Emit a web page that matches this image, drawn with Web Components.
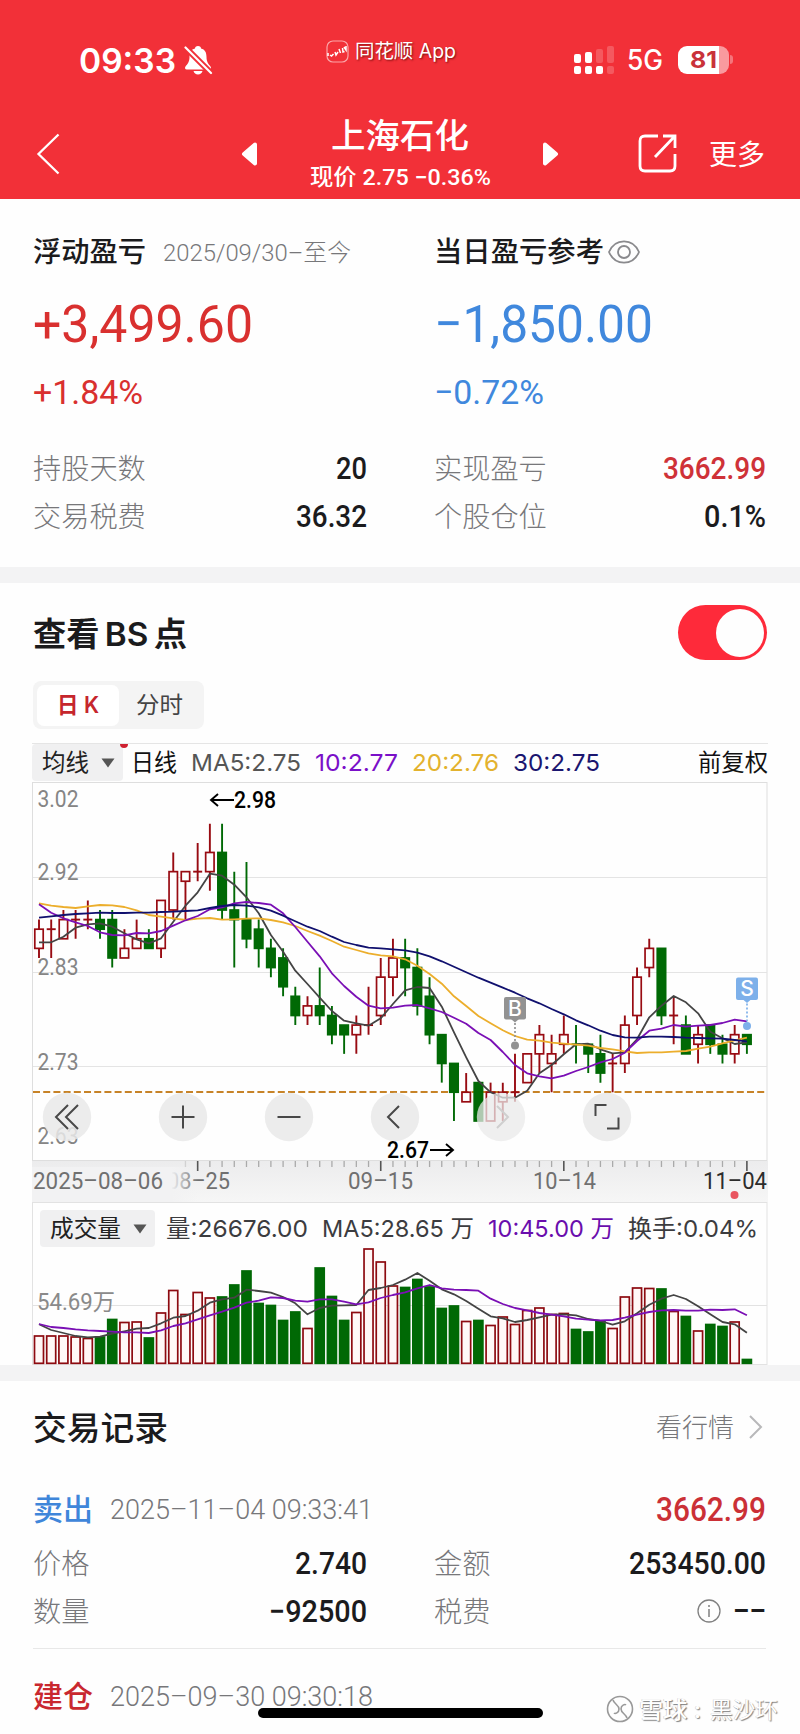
<!DOCTYPE html>
<html lang="zh-CN">
<head>
<meta charset="UTF-8">
<title>上海石化</title>
<style>
    body {
        margin: 0;
        width: 800px;
        height: 1734px;
        overflow: hidden;
        background: #fefefe;
        color: #1b1b1d;
        font-family: Inter, "Noto Sans CJK SC", sans-serif;
    }
</style>
</head>
<body>
<stock-page></stock-page>

<script>
/**
 * Single line of text squeezed or stretched to a given width.
 * Usage: <fit-text w="120">text</fit-text>
 */
class FitText extends HTMLElement {
    constructor() {
        super();
        this.attachShadow({ mode: 'open' });
        this.shadowRoot.innerHTML = `
            <style>
                :host { display: block; flex: none; white-space: nowrap; line-height: 1.2; }
                :host([din]) { font-family: Roboto, "Noto Sans CJK SC", sans-serif; }
                span { display: inline-block; padding-top: 2px; transform-origin: 0 50%; }
            </style>
            <span><slot></slot></span>
        `;
    }

    connectedCallback() {
        const w = Number(this.getAttribute('w'));
        const span = this.shadowRoot.querySelector('span');
        this.style.width = w + 'px';
        span.style.transform = `scaleX(${w / span.getBoundingClientRect().width})`;
    }
}

class StatusBar extends HTMLElement {
    constructor() {
        super();
        this.attachShadow({ mode: 'open' });
        this.shadowRoot.innerHTML = `
            <style>
                :host { display: grid; grid-template-columns: 326px 1fr auto; height: 108px; color: #fff; }
                .left, .right { display: flex; align-items: center; height: 119px; }
                .left { padding-left: 79px; gap: 8px; }
                .time { font-size: 34.5px; font-weight: 600; }
                .app { display: flex; align-items: center; gap: 6px; height: 102px; font-size: 19.5px; text-shadow: 1px 1px 2px #7a1010; }
                .right { padding-right: 67px; }
                .net { font-size: 28px; font-weight: 500; margin: 1px 15px 0 13px; }
                .battery {
                    display: flex; align-items: center; justify-content: center;
                    width: 51px; height: 28px; border-radius: 9px;
                    background: linear-gradient(90deg, #fff 81%, #f99a9e 81%);
                    color: #c9323a; font-size: 23px; font-weight: 700;
                }
                .cap { width: 3px; height: 9px; margin-left: 1px; border-radius: 0 4px 4px 0; background: #f5757b; }
            </style>
            <div class="left">
                <fit-text class="time" w="97">09:33</fit-text>
                <svg width="29" height="30" viewBox="0 0 29 30">
                    <path d="M14 1c-2 0-3 1-3 2.500c-4 1-5.500 4-5.500 8.500c0 5-2 7-4 9.500c-1 1.500-.4 3 1.200 3h22.600c1.600 0 2.200-1.500 1.200-3c-2-2.500-4-4.500-4-9.500c0-4.500-1.500-7.500-5.500-8.500C17 2 16 1 14 1z" fill="#fff"/>
                    <path d="M9.500 26h9c-.6 2.200-2.200 3.500-4.500 3.500S10.100 28.200 9.500 26z" fill="#fff"/>
                    <path d="M1 2L27 28" stroke="#f23038" stroke-width="6"/>
                    <path d="M1.500 2.500L27 28" stroke="#fff" stroke-width="2.200" stroke-linecap="round"/>
                </svg>
            </div>
            <div class="app">
                <svg width="23" height="23" viewBox="0 0 23 23" fill="none">
                    <rect x="1" y="1" width="21" height="21" rx="6" stroke="#fba5a8" stroke-width="1.200"/>
                    <path d="M2 13v3M4 15l1.500 1 2-2M9 12l1 3 2-3M13 9l1.500 4M16.500 8l.5 4 1.500-.5M20 6v4l-2-3" stroke="#fff" stroke-width="1.500"/>
                </svg>
                <fit-text w="101">同花顺 App</fit-text>
            </div>
            <div class="right">
                <svg width="41" height="30" viewBox="0 0 41 30" fill="#fff">
                    <rect x="1" y="9" width="7" height="9" rx="2"/>
                    <rect x="12" y="7" width="7" height="11" rx="2"/>
                    <rect x="23" y="4" width="7" height="14" rx="2" opacity=".2"/>
                    <rect x="34" y="1" width="7" height="17" rx="2" opacity=".2"/>
                    <rect x="1" y="21" width="7" height="8" rx="2"/>
                    <rect x="12" y="21" width="7" height="8" rx="2"/>
                    <rect x="23" y="21" width="7" height="8" rx="2"/>
                    <rect x="34" y="21" width="7" height="8" rx="2" opacity=".2"/>
                </svg>
                <fit-text class="net" w="36">5G</fit-text>
                <div class="battery"><fit-text w="27">81</fit-text></div>
                <div class="cap"></div>
            </div>
        `;
    }
}

class NavBar extends HTMLElement {
    constructor() {
        super();
        this.attachShadow({ mode: 'open' });
        this.shadowRoot.innerHTML = `
            <style>
                :host { display: flex; align-items: center; height: 91px; padding: 0 34px 0 36px; color: #fff; }
                .prev { margin-left: 181px; }
                .title { width: 182px; margin: 0 50px; padding-bottom: 8px; display: flex; flex-direction: column; align-items: center; }
                .name { font-size: 34.5px; font-weight: 500; line-height: 50px; height: 51px; }
                .price { font-size: 22.5px; font-weight: 500; line-height: 30px; height: 30px; }
                .share { margin-left: 79px; }
                .more { margin-left: 32px; padding-top: 2px; font-size: 28px; }
            </style>
            <svg width="24" height="42" viewBox="0 0 24 42" fill="none" stroke="#fff" stroke-width="2.300"><path d="M22.500 1.500L2.500 21l20 19.500"/></svg>
            <svg class="prev" width="18" height="24" viewBox="0 0 18 24"><path d="M14 2.500L3 12l11 9.500z" fill="#fff" stroke="#fff" stroke-width="4" stroke-linejoin="round"/></svg>
            <div class="title">
                <fit-text class="name" w="138">上海石化</fit-text>
                <fit-text class="price" din w="181">现价 2.75 −0.36%</fit-text>
            </div>
            <svg width="18" height="24" viewBox="0 0 18 24"><path d="M4 2.500L15 12 4 21.500z" fill="#fff" stroke="#fff" stroke-width="4" stroke-linejoin="round"/></svg>
            <svg class="share" width="39" height="39" viewBox="0 0 39 39" fill="none" stroke="#fff" stroke-width="2.800">
                <path d="M20 2H7Q2 2 2 7v25q0 5 5 5h25q5 0 5-5V20M25 2h12v12M36 3L17 23"/>
            </svg>
            <fit-text class="more" w="56">更多</fit-text>
        `;
    }
}

class PnlColumn extends HTMLElement {
    constructor() {
        super();
        this.attachShadow({ mode: 'open' });
        this.shadowRoot.innerHTML = `
            <style>
                :host { display: block; --tone: #d9302f; }
                :host([down]) { --tone: #4088dd; }
                .head { display: flex; align-items: center; height: 38px; font-size: 28px; font-weight: 500; }
                .amount, .percent { display: flex; align-items: center; color: var(--tone); }
                .amount { height: 60px; margin-top: 22px; font-size: 52.500px; font-weight: 450; }
                .percent { height: 40px; margin: 18px 0 33px; font-size: 34px; font-weight: 450; }
            </style>
            <div class="head"><slot name="head"></slot></div>
            <div class="amount"><slot name="amount"></slot></div>
            <div class="percent"><slot name="percent"></slot></div>
            <slot></slot>
        `;
    }
}

class DataRow extends HTMLElement {
    constructor() {
        super();
        this.attachShadow({ mode: 'open' });
        this.shadowRoot.innerHTML = `
            <style>
                :host { display: flex; align-items: center; justify-content: space-between; height: 48px; }
                .label { padding-top: 3px; font-size: 28.200px; font-weight: 300; color: #77777a; line-height: 1.2; }
                .value { display: flex; align-items: center; gap: 12px; font-size: 31px; font-weight: 500; }
                :host([red]) .value { color: #cf3238; }
            </style>
            <div class="label">${this.getAttribute('label')}</div>
            <div class="value"><slot></slot></div>
        `;
    }
}

class ToggleSwitch extends HTMLElement {
    constructor() {
        super();
        this.attachShadow({ mode: 'open' });
        this.shadowRoot.innerHTML = `
            <style>
                :host { display: flex; align-items: center; justify-content: flex-end; box-sizing: border-box; width: 89px; height: 55px; padding: 3px; border-radius: 28px; background: #fe2a3a; }
                i { width: 48px; height: 48px; border-radius: 50%; background: #fefefe; }
            </style>
            <i></i>
        `;
    }
}

class SelectChip extends HTMLElement {
    constructor() {
        super();
        this.attachShadow({ mode: 'open' });
        this.shadowRoot.innerHTML = `
            <style>
                :host { display: flex; flex: none; align-items: center; gap: 12px; box-sizing: border-box; height: 37px; padding-left: 10px; border-radius: 4px; background: #f0f0f1; color: #222; }
            </style>
            <slot></slot>
            <svg width="14" height="10" viewBox="0 0 14 10"><path d="M.5 .5h13L7 9.500z" fill="#555"/></svg>
        `;
    }
}

// [up, high, body top, body bottom, low] in cents below 2.98, then volume bar height
const CANDLES = [
    [1, 10, 11, 13, 14, 28], [1, 10, 11, 11, 14, 28], [1, 9, 10, 12, 12, 28], [1, 9, 10, 10, 12, 27],
    [1, 8, 10, 10, 11, 25.5], [0, 9, 10, 11, 12, 27], [0, 9, 10, 14, 15, 44.5], [1, 11, 13, 14, 14, 41.5],
    [1, 10, 12, 13, 13, 42], [0, 11, 12, 13, 13, 26], [1, 8, 8, 13, 14, 51], [1, 3, 5, 9, 10, 73.5],
    [1, 5, 5, 6, 10, 49.5], [1, 2, 5, 5, 6, 71.5], [1, 0, 3, 5, 7, 66], [0, 0, 3, 9, 10, 67],
    [0, 5, 9, 10, 15, 79], [0, 4, 10, 12, 13, 93], [0, 10, 11, 13, 15, 60.5], [0, 12, 13, 15, 16, 58.5],
    [0, 13, 14, 17, 18, 43.5], [0, 17, 18, 20, 21, 52], [1, 18, 19, 20, 21, 35.5], [0, 15, 19, 20, 21, 96],
    [0, 19, 20, 22, 23, 67.5], [0, 21, 21, 22, 24, 43.5], [1, 20, 21, 22, 24, 51.5], [1, 17, 21, 21, 22, 115],
    [1, 14, 16, 20, 21, 102], [1, 12, 14, 16, 18, 78], [0, 12, 14, 15, 18, 76.5], [0, 13, 15, 19, 20, 84.5],
    [0, 16, 18, 22, 23, 77], [0, 22, 22, 25, 27, 55.5], [0, 25, 25, 28, 31, 58], [1, 26, 28, 29, 29, 42.5],
    [0, 27, 27, 31, 31, 43.5], [1, 27, 28, 31, 31, 38.5], [1, 27, 28, 29, 31, 47], [1, 24, 28, 28, 29, 39.5],
    [1, 24, 24, 27, 27, 53.5], [1, 21, 22, 24, 26, 56], [1, 22, 24, 25, 28, 49.5], [1, 20, 22, 23, 24, 50.5],
    [0, 21, 23, 23, 25, 34.5], [0, 23, 23, 24, 26, 32], [0, 22, 24, 26, 27, 43], [1, 24, 25, 25, 28, 35.5],
    [1, 20, 21, 25, 26, 67], [1, 15, 16, 20, 21, 76], [1, 12, 13, 15, 16, 75.5], [0, 13, 13, 20, 21, 75],
    [1, 18, 20, 20, 23, 52.5], [0, 20, 21, 24, 24, 47.5], [1, 21, 22, 23, 25, 33], [0, 21, 21, 23, 24, 39.5],
    [0, 22, 23, 24, 25, 37.5], [1, 21, 22, 24, 25, 42], [0, 22, 22, 23, 24, 4.5]
];

// average lines, in thirds of a pixel from the top of each panel
const MA = {
    5: [487, 487, 470, 443, 433, 430, 440, 460, 478, 490, 475, 425, 377, 337, 281, 287, 314, 352, 400, 465, 515, 572, 612, 653, 693, 722, 730, 737, 715, 672, 631, 621, 624, 680, 757, 832, 903, 937, 953, 953, 932, 880, 855, 823, 793, 791, 808, 820, 817, 778, 712, 677, 648, 667, 700, 755, 775, 792, 787],
    10: [373, 398, 415, 427, 438, 457, 465, 466, 459, 460, 453, 437, 421, 408, 388, 382, 370, 366, 369, 374, 400, 441, 485, 529, 580, 618, 650, 677, 685, 683, 677, 675, 685, 696, 713, 731, 759, 780, 816, 855, 880, 889, 895, 887, 873, 861, 847, 837, 818, 783, 752, 746, 735, 740, 737, 735, 729, 719, 724],
    20: [370, 377, 381, 384, 379, 375, 376, 381, 391, 405, 410, 415, 420, 416, 414, 419, 418, 416, 415, 420, 427, 438, 453, 467, 483, 500, 510, 520, 526, 529, 538, 557, 582, 611, 649, 678, 708, 730, 751, 768, 779, 782, 788, 791, 794, 797, 804, 808, 814, 819, 817, 817, 815, 813, 806, 800, 790, 781, 773],
    30: [413, 409, 405, 402, 400, 398, 399, 399, 398, 398, 396, 395, 393, 391, 384, 378, 375, 377, 382, 392, 407, 424, 440, 453, 470, 486, 495, 503, 505, 508, 511, 518, 529, 544, 560, 577, 593, 608, 623, 638, 655, 670, 687, 703, 721, 736, 752, 765, 772, 773, 770, 770, 771, 773, 774, 775, 776, 780, 784]
};
const VOL_MA = {
    5: [523, 540, 549, 558, 562, 560, 551, 544, 536, 534, 520, 503, 498, 482, 458, 448, 443, 419, 423, 428, 441, 460, 493, 474, 467, 466, 465, 420, 414, 405, 389, 369, 392, 418, 433, 453, 476, 499, 505, 516, 510, 502, 494, 493, 496, 507, 513, 524, 514, 490, 464, 446, 435, 447, 469, 493, 516, 523, 548],
    10: [522, 531, 534, 538, 541, 543, 545, 547, 547, 549, 541, 528, 520, 508, 496, 485, 473, 458, 452, 442, 444, 452, 455, 448, 448, 455, 463, 457, 444, 435, 427, 415, 405, 415, 419, 420, 422, 446, 462, 474, 481, 489, 494, 499, 506, 509, 511, 510, 503, 494, 486, 481, 480, 482, 482, 479, 480, 478, 496]
};
const RED = '#980b12';
const GREEN = '#006905';
const LINE_COLORS = { 5: '#444', 10: '#7a0fb5', 20: '#ecae2c', 30: '#10106e' };

const xAt = i => 7 + i * 12.205;

function maLine(points, color, top) {
    const d = points.map((y, i) => `${xAt(i).toFixed(1)},${(y / 3 + top).toFixed(1)}`).join(' ');
    return `<polyline points="${d}" fill="none" stroke="${color}" stroke-width="1.8" stroke-linejoin="round"/>`;
}

class PriceChart extends HTMLElement {
    constructor() {
        super();
        this.attachShadow({ mode: 'open' });
        this.shadowRoot.innerHTML = `
            <style>
                :host { display: block; height: 379px; }
                svg { display: block; overflow: visible; }
                text { font: 24px Roboto, sans-serif; fill: #858585; }
                .peak { font-weight: 500; fill: #000; }
                .tag { font: 500 21px Inter, sans-serif; fill: #fff; text-anchor: middle; }
            </style>
            <svg width="736" height="379" viewBox="0 0 736 379">
                <rect x=".5" y=".5" width="734.500" height="378" fill="none" stroke="#dedede"/>
                <path d="M1 95.500h734M1 190.500h734M1 284.500h734" stroke="#e4e4e4"/>
                ${this.labels()}
                <path d="M1 310h734" stroke="#c78327" stroke-width="2" stroke-dasharray="7 3.200"/>
                ${CANDLES.map((c, i) => this.candle(c, i)).join('')}
                ${[5, 20, 10, 30].map(n => maLine(MA[n], LINE_COLORS[n], -2)).join('')}
                <g stroke="#000" stroke-width="1.900" fill="none">
                    <path d="M202 18h-22M186 12l-7 6 7 6M398 368h22M414 362l7 6-7 6"/>
                </g>
                <text class="peak" x="202" y="26" textLength="42" lengthAdjust="spacingAndGlyphs">2.98</text>
                <text class="peak" x="355" y="376" textLength="42" lengthAdjust="spacingAndGlyphs">2.67</text>
                ${this.marker('B', 483, 215, 263.500, '#929292')}
                ${this.marker('S', 715, 195.500, 244, '#7db0ea')}
                ${this.controls()}
            </svg>
        `;
    }

    labels() {
        const rows = [['3.02', 24.5], ['2.92', 98], ['2.83', 193], ['2.73', 287.500], ['2.63', 362]];
        return rows.map(([t, y]) => `<text x="5.500" y="${y}" textLength="41" lengthAdjust="spacingAndGlyphs">${t}</text>`).join('');
    }

    candle([up, hi, top, bottom, lo], i) {
        const y = n => 41.700 + n * 9.590;
        const x = xAt(i);
        const color = up ? RED : GREEN;
        const wicks = `<path d="M${x} ${y(hi)}V${y(top)}M${x} ${y(bottom)}V${y(lo)}" stroke="${color}" stroke-width="1.9"/>`;
        if (top === bottom) {
            return wicks + `<path d="M${x - 4.500} ${y(top)}h9" stroke="${color}" stroke-width="1.9"/>`;
        }
        return wicks + `<rect x="${x - 4.200}" y="${y(top)}" width="8.400" height="${y(bottom) - y(top)}" fill="${up ? '#fefefe' : GREEN}" stroke="${color}" stroke-width="1.700"/>`;
    }

    marker(letter, x, top, dot, color) {
        return `
            <rect x="${x - 11}" y="${top}" width="22" height="22.500" rx="2" fill="${color}"/>
            <path d="M${x - 4} ${top + 22}h8l-4 3.500z" fill="${color}"/>
            <path d="M${x} ${top + 26}V${dot}" stroke="${color}" stroke-width="1.700" stroke-dasharray="2 2"/>
            <circle cx="${x}" cy="${dot}" r="4" fill="${color}"/>
            <text class="tag" x="${x}" y="${top + 18.500}">${letter}</text>
        `;
    }

    controls() {
        const icons = [
            [35, 'M1 -12L-11 0 1 12M11 -12L-1 0 11 12'],
            [151, 'M-11.500 0h23M0 -11.500v23'],
            [257, 'M-11.500 0h23'],
            [363, 'M4 -11L-7 0 4 11'],
            [469, 'M-4 -11L7 0-4 11'],
            [575, 'M-11.500 -1v-11h11M0 11.500h11.500v-11']
        ];
        return icons.map(([x, d], i) => `
            <g transform="translate(${x} 335)">
                <circle r="24.200" fill="#e9e9e9" fill-opacity="${i === 4 ? .75 : .85}"/>
                <path d="${d}" fill="none" stroke="${i === 4 ? '#cfcfcf' : '#484848'}" stroke-width="2"/>
            </g>
        `).join('');
    }
}

class DateAxis extends HTMLElement {
    constructor() {
        super();
        this.attachShadow({ mode: 'open' });
        let ticks = '';
        for (let i = 12; i < 59; i++) {
            const major = (i - 13) % 15 === 0;
            ticks += `<path d="M${xAt(i)} 0v${major ? 10 : 6}" stroke="${major ? '#555' : '#aaa'}" stroke-width="${major ? 1.6 : 1.3}" ${i === 12 ? 'opacity=".4"' : ''}/>`;
        }
        this.shadowRoot.innerHTML = `
            <style>
                :host { display: block; height: 41px; background: linear-gradient(#ececed, #f6f6f6); }
                svg { display: block; overflow: visible; }
                text { font: 23px Roboto, sans-serif; fill: #707070; }
                .last { fill: #2c2c2c; }
            </style>
            <svg width="736" height="41" viewBox="0 0 736 41">
                <defs>
                    <linearGradient id="fade"><stop offset=".84" stop-color="#f2f2f3"/><stop offset="1" stop-color="#f2f2f3" stop-opacity="0"/></linearGradient>
                </defs>
                ${ticks}
                <text x="135" y="27.500" textLength="63" lengthAdjust="spacingAndGlyphs">08–25</text>
                <rect x="0" y="6" width="166" height="35" fill="url(#fade)"/>
                <text x="1" y="27.500" textLength="130" lengthAdjust="spacingAndGlyphs">2025–08–06</text>
                <text x="316" y="27.500" textLength="65" lengthAdjust="spacingAndGlyphs">09–15</text>
                <text x="501" y="27.500" textLength="63" lengthAdjust="spacingAndGlyphs">10–14</text>
                <text class="last" x="671" y="27.500" textLength="64" lengthAdjust="spacingAndGlyphs">11–04</text>
                <circle cx="702.500" cy="34" r="4" fill="#e95560"/>
            </svg>
        `;
    }
}

class VolumeChart extends HTMLElement {
    constructor() {
        super();
        this.attachShadow({ mode: 'open' });
        this.shadowRoot.innerHTML = `
            <style>
                :host { display: grid; height: 163px; }
                header, svg { grid-area: 1 / 1; }
                header { display: flex; align-items: center; height: 37px; margin: 8px 0 0 8px; font-size: 23.500px; color: #3c3c3f; }
                select-chip { width: 115px; margin-right: 11px; }
                .next { margin-left: 14px; }
                .ma10 { color: #6a0dad; }
                text { font: 23px Roboto, "Noto Sans CJK SC", sans-serif; fill: #8a8a8a; }
            </style>
            <svg width="736" height="163" viewBox="0 0 736 163">
                <rect x=".5" y=".5" width="734.500" height="162" fill="#fefefe" stroke="#e2e2e2"/>
                <path d="M1 103.500h734" stroke="#e2e2e2"/>
                <text x="5" y="107.500" textLength="78" lengthAdjust="spacingAndGlyphs">54.69万</text>
                ${CANDLES.map((c, i) => this.bar(c[0], c[5], i)).join('')}
                ${[5, 10].map(n => maLine(VOL_MA[n], LINE_COLORS[n], -52)).join('')}
            </svg>
            <header>
                <select-chip><fit-text w="71">成交量</fit-text></select-chip>
                <fit-text w="142">量:26676.00</fit-text>
                <fit-text class="next" w="152">MA5:28.65 万</fit-text>
                <fit-text class="next ma10" w="126">10:45.00 万</fit-text>
                <fit-text class="next" w="130">换手:0.04%</fit-text>
            </header>
        `;
    }

    bar(up, h, i) {
        const x = xAt(i) - 4.500;
        return `<rect x="${x}" y="${161.300 - h + .7}" width="9" height="${h - .7}" fill="${up ? '#fff8f7' : GREEN}" stroke="${up ? '#8d0a10' : GREEN}" stroke-width="1.700"/>`;
    }
}

class ChartSection extends HTMLElement {
    constructor() {
        super();
        this.attachShadow({ mode: 'open' });
        this.shadowRoot.innerHTML = `
            <style>
                :host { display: block; height: 760px; padding: 22px 32px 0; }
                .title { display: flex; align-items: center; justify-content: space-between; height: 55px; padding: 0 1px; font-size: 32.500px; font-weight: 600; word-spacing: -3px; }
                .title fit-text { padding-top: 2px; }
                .tabs { display: flex; align-items: center; box-sizing: border-box; width: 171px; height: 48px; margin: 21px 0 14px 1px; padding: 4px; border-radius: 8px; background: #f4f4f4; font-size: 23px; }
                .tabs div { display: flex; align-items: center; justify-content: center; flex: 1; height: 41px; border-radius: 7px; color: #444; }
                .tabs .on { background: #fff; color: #c6262d; font-weight: 600; }
                .bar { display: flex; align-items: center; position: relative; box-sizing: border-box; height: 39px; border-top: 1px solid #e5e5e5; padding-bottom: 1px; font-size: 23.500px; color: #111; }
                .bar select-chip { width: 91px; margin-right: 8px; }
                .ma { margin-left: 14px; }
                .ma5 { color: #555; }
                .ma10 { color: #7a10c8; }
                .ma20 { color: #e3b22e; }
                .ma30 { color: #1b1670; }
                .adjust { margin-left: auto; }
                .dot { position: absolute; left: 88px; top: 0; width: 8px; height: 4px; border-radius: 0 0 4px 4px; background: #cf2030; }
            </style>
            <div class="title"><fit-text w="154">查看 BS 点</fit-text><toggle-switch></toggle-switch></div>
            <div class="tabs">
                <div class="on"><fit-text w="42">日 K</fit-text></div>
                <div><fit-text w="47">分时</fit-text></div>
            </div>
            <div class="bar">
                <select-chip><fit-text w="47">均线</fit-text></select-chip>
                <fit-text w="46">日线</fit-text>
                <fit-text class="ma ma5" w="110">MA5:2.75</fit-text>
                <fit-text class="ma ma10" w="83">10:2.77</fit-text>
                <fit-text class="ma ma20" w="87">20:2.76</fit-text>
                <fit-text class="ma ma30" w="87">30:2.75</fit-text>
                <fit-text class="adjust" w="70">前复权</fit-text>
                <i class="dot"></i>
            </div>
            <price-chart></price-chart>
            <date-axis></date-axis>
            <volume-chart></volume-chart>
        `;
    }
}

class TradeHead extends HTMLElement {
    constructor() {
        super();
        this.attachShadow({ mode: 'open' });
        this.shadowRoot.innerHTML = `
            <style>
                :host { display: flex; align-items: center; height: 60px; }
                .kind { font-size: 29.500px; font-weight: 500; color: #3f86da; }
                :host([buy]) .kind { color: #c9282f; }
                .date { margin-left: 17px; font-size: 28.500px; font-weight: 300; color: #77777a; }
                .sum { margin-left: auto; font-size: 33px; font-weight: 500; color: #cb3036; }
            </style>
            <fit-text class="kind" w="60">${this.getAttribute('kind')}</fit-text>
            <fit-text class="date" din w="263">${this.getAttribute('date')}</fit-text>
            <div class="sum"><slot></slot></div>
        `;
    }
}

class TradeRecords extends HTMLElement {
    constructor() {
        super();
        this.attachShadow({ mode: 'open' });
        this.shadowRoot.innerHTML = `
            <style>
                :host { display: block; padding: 16px 34px 0 33px; }
                .title { display: flex; align-items: center; height: 60px; font-size: 33.500px; font-weight: 500; }
                .link { margin: 0 14px 0 auto; font-size: 26px; font-weight: 300; color: #77777a; }
                .title svg { margin-right: 3px; }
                .first { margin-top: 22px; }
                .grid { display: grid; grid-template-columns: 334px 332px; column-gap: 67px; padding-bottom: 13px; border-bottom: 1px solid #e8e8e8; }
                .second { margin-top: 17px; }
            </style>
            <div class="title">
                <fit-text w="135">交易记录</fit-text>
                <fit-text class="link" w="78">看行情</fit-text>
                <svg width="15" height="26" viewBox="0 0 15 26" fill="none" stroke="#b8b8ba" stroke-width="2"><path d="M2 2l11 11L2 24"/></svg>
            </div>
            <trade-head class="first" kind="卖出" date="2025–11–04 09:33:41"><fit-text din w="110">3662.99</fit-text></trade-head>
            <div class="grid">
                <data-row label="价格"><fit-text din w="72">2.740</fit-text></data-row>
                <data-row label="金额"><fit-text din w="137">253450.00</fit-text></data-row>
                <data-row label="数量"><fit-text din w="98">−92500</fit-text></data-row>
                <data-row label="税费">
                    <svg width="24" height="24" viewBox="0 0 24 24" fill="none" stroke="#808080" stroke-width="1.300"><circle cx="12" cy="12" r="11"/><path d="M12 10v8M12 6v2" stroke-width="1.500"/></svg>
                    <fit-text din w="33">––</fit-text>
                </data-row>
            </div>
            <trade-head class="second" buy kind="建仓" date="2025–09–30 09:30:18"></trade-head>
        `;
    }
}

class PageWatermark extends HTMLElement {
    constructor() {
        super();
        this.attachShadow({ mode: 'open' });
        this.shadowRoot.innerHTML = `
            <style>
                :host { display: flex; align-items: center; color: #fff; font-size: 22.500px; font-weight: 500; text-shadow: 1px 1px 1px #808080, -.5px -.5px 0 #ccc; }
                svg { margin-right: 5px; }
                .author { margin-left: 9px; font-weight: 400; }
            </style>
            <svg width="28" height="28" viewBox="0 0 28 28" fill="none">
                <g stroke="#999" stroke-width="1.600">
                    <circle cx="14" cy="14" r="12.500"/>
                    <path d="M7 5c1 4 6 5 6 9s-4 5-5 4M21 23c-1-4-6-5-6-9s4-5 5-4"/>
                </g>
            </svg>
            <fit-text w="62">雪球 :</fit-text>
            <fit-text class="author" w="68">黑沙环</fit-text>
        `;
    }
}

class StockPage extends HTMLElement {
    constructor() {
        super();
        this.attachShadow({ mode: 'open' });
        this.shadowRoot.innerHTML = `
            <style>
                :host { display: block; position: relative; height: 1734px; overflow: hidden; }
                .top { height: 199px; background: #f23038; }
                .summary { display: grid; grid-template-columns: 334px 332px; column-gap: 67px; box-sizing: border-box; height: 368px; padding: 34px 0 0 33px; }
                .range { margin-left: 17px; font-size: 24px; font-weight: 300; color: #77777a; }
                .eye { margin-left: 4px; }
                .gap { height: 16px; background: #f3f3f4; }
                .home { position: absolute; left: 258px; top: 1707.500px; width: 285px; height: 10.500px; border-radius: 6px; background: #000; }
                page-watermark { position: absolute; left: 606px; top: 1694px; }
            </style>
            <div class="top">
                <status-bar></status-bar>
                <nav-bar></nav-bar>
            </div>
            <div class="summary">
                <pnl-column>
                    <fit-text slot="head" w="113">浮动盈亏</fit-text>
                    <fit-text slot="head" class="range" din w="188">2025/09/30–至今</fit-text>
                    <fit-text slot="amount" din w="220">+3,499.60</fit-text>
                    <fit-text slot="percent" din w="110">+1.84%</fit-text>
                    <data-row label="持股天数"><fit-text din w="31">20</fit-text></data-row>
                    <data-row label="交易税费"><fit-text din w="71">36.32</fit-text></data-row>
                </pnl-column>
                <pnl-column down>
                    <fit-text slot="head" w="170">当日盈亏参考</fit-text>
                    <svg slot="head" class="eye" width="32" height="24" viewBox="0 0 32 24" fill="none" stroke="#8a8a8d" stroke-width="1.800"><path d="M1 12C4 5 9.500 1.300 16 1.300S28 5 31 12c-3 7-8.500 10.700-15 10.700S4 19 1 12z"/><circle cx="16" cy="12" r="6"/></svg>
                    <fit-text slot="amount" din w="219">−1,850.00</fit-text>
                    <fit-text slot="percent" din w="110">−0.72%</fit-text>
                    <data-row red label="实现盈亏"><fit-text din w="103">3662.99</fit-text></data-row>
                    <data-row label="个股仓位"><fit-text din w="62">0.1%</fit-text></data-row>
                </pnl-column>
            </div>
            <div class="gap"></div>
            <chart-section></chart-section>
            <div class="gap"></div>
            <trade-records></trade-records>
            <div class="home"></div>
            <page-watermark></page-watermark>
        `;
    }
}

customElements.define('fit-text', FitText);
customElements.define('status-bar', StatusBar);
customElements.define('nav-bar', NavBar);
customElements.define('pnl-column', PnlColumn);
customElements.define('data-row', DataRow);
customElements.define('toggle-switch', ToggleSwitch);
customElements.define('select-chip', SelectChip);
customElements.define('price-chart', PriceChart);
customElements.define('date-axis', DateAxis);
customElements.define('volume-chart', VolumeChart);
customElements.define('chart-section', ChartSection);
customElements.define('trade-head', TradeHead);
customElements.define('trade-records', TradeRecords);
customElements.define('page-watermark', PageWatermark);
customElements.define('stock-page', StockPage);
</script>
</body>
</html>
